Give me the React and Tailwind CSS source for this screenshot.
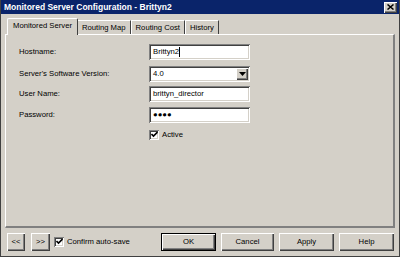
const raised = 'shadow-[inset_1px_1px_0_#ffffff,inset_-1px_-1px_0_#404040,inset_-2px_-2px_0_#808080]'
const sunken = 'shadow-[inset_1px_1px_0_#808080,inset_-1px_-1px_0_#ffffff,inset_2px_2px_0_#404040,inset_-2px_-2px_0_#d4d0c8]'

function Check() {
  return (
    <span className={`w-[10px] h-[10px] bg-white flex items-center justify-center ${sunken}`}>
      <svg width="7" height="7" viewBox="0 0 7 7">
        <path d="M0.5 3 L2.5 5 L6.5 1" stroke="#000" strokeWidth="1.6" fill="none" />
      </svg>
    </span>
  )
}

function Field({ label, children }) {
  return (
    <div className="flex items-center h-[16px]">
      <span className="w-[130px] shrink-0">{label}</span>
      {children}
    </div>
  )
}

function TextBox({ value, caret }) {
  return (
    <div className={`w-[101px] h-[16px] bg-white flex items-center px-[4px] ${sunken}`}>
      <span>{value}</span>
      {caret && <span className="w-px h-[10px] bg-black" />}
    </div>
  )
}

function Btn({ children, w, def }) {
  return (
    <button
      className={`h-[18px] ${w} flex items-center justify-center bg-[#d4d0c8] ${
        def ? 'border border-black ' + raised : raised
      }`}
    >
      {children}
    </button>
  )
}

export default function App() {
  return (
    <div
      className="w-[400px] h-[257px] bg-[#d4d0c8] flex flex-col border-l border-r border-b border-[#404040] text-[7.7px] text-black overflow-hidden"
      style={{ fontFamily: 'Tahoma, "Liberation Sans", Arial, sans-serif' }}
    >
      {/* Title bar */}
      <div className="h-[14px] bg-[#0a246a] flex items-center justify-between pl-[3px] pr-[2px] shrink-0">
        <span className="text-white font-bold text-[8.5px]">Monitored Server Configuration - Brittyn2</span>
        <span className={`w-[13px] h-[11px] bg-[#d4d0c8] flex items-center justify-center ${raised}`}>
          <svg width="7" height="6" viewBox="0 0 7 6">
            <path d="M0.5 0.5 L6.5 5.5 M6.5 0.5 L0.5 5.5" stroke="#000" strokeWidth="1.5" />
          </svg>
        </span>
      </div>

      {/* Tabs */}
      <div className="flex items-end pl-[6px] mt-[3px] h-[17px] shrink-0 relative z-10">
        <div className="h-[17px] px-[5px] flex items-center bg-[#d4d0c8] border-t border-l border-white border-r border-r-[#404040] rounded-t-[2px] -mb-px pb-[2px]">
          Monitored Server
        </div>
        <div className="h-[14px] px-[4px] flex items-center border-t border-white border-r border-r-[#404040]">
          Routing Map
        </div>
        <div className="h-[14px] px-[4px] flex items-center border-t border-l border-white border-r border-r-[#404040]">
          Routing Cost
        </div>
        <div className="h-[14px] px-[4px] flex items-center border-t border-l border-white border-r border-r-[#404040]">
          History
        </div>
      </div>

      {/* Panel */}
      <div className="mx-[4px] h-[194px] border-t border-l border-white border-r-2 border-b-2 border-r-[#808080] border-b-[#808080] pl-[13px] pt-[9px] flex flex-col shrink-0">
        <Field label="Hostname:">
          <TextBox value="Brittyn2" caret />
        </Field>
        <div className="mt-[6px]">
          <Field label="Server's Software Version:">
            <div className={`w-[101px] h-[16px] bg-white flex items-center justify-between pl-[4px] pr-[2px] ${sunken}`}>
              <span>4.0</span>
              <span className={`w-[12px] h-[12px] bg-[#d4d0c8] flex items-center justify-center ${raised}`}>
                <svg width="7" height="4" viewBox="0 0 7 4">
                  <path d="M0 0 H7 L3.5 4 Z" fill="#000" />
                </svg>
              </span>
            </div>
          </Field>
        </div>
        <div className="mt-[4px]">
          <Field label="User Name:">
            <TextBox value="brittyn_director" />
          </Field>
        </div>
        <div className="mt-[5px]">
          <Field label="Password:">
            <TextBox value="●●●●" />
          </Field>
        </div>
        <div className="mt-[6px] ml-[130px] flex items-center gap-[3px]">
          <Check />
          <span>Active</span>
        </div>
      </div>

      {/* Footer */}
      <div className="flex items-center mt-[5px] pl-[6px] pr-[5px] h-[18px]">
        <Btn w="w-[18px]">&lt;&lt;</Btn>
        <div className="ml-[6px]">
          <Btn w="w-[19px]">&gt;&gt;</Btn>
        </div>
        <div className="ml-[4px] flex items-center gap-[3px]">
          <Check />
          <span>Confirm auto-save</span>
        </div>
        <div className="ml-auto flex gap-[5px]">
          <Btn w="w-[55px]" def>OK</Btn>
          <Btn w="w-[53px]">Cancel</Btn>
          <Btn w="w-[55px]">Apply</Btn>
          <Btn w="w-[55px]">Help</Btn>
        </div>
      </div>
    </div>
  )
}
